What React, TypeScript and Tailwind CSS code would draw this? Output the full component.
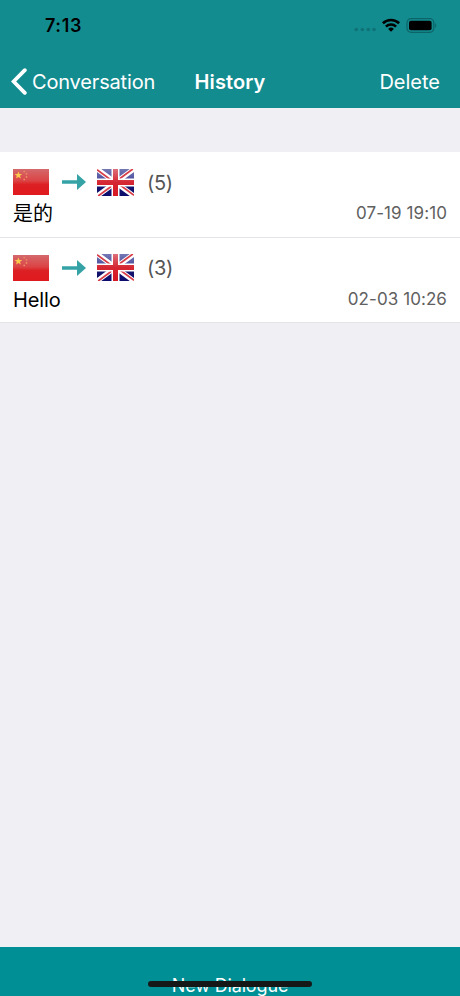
import { useState } from 'react'

const conversations = [
  { id: 1, text: '是的', count: 5, date: '07-19 19:10' },
  { id: 2, text: 'Hello', count: 3, date: '02-03 10:26' }
]

function ChinaFlag() {
  return (
    <svg viewBox="0 0 36 26" className="w-9 h-[26px]">
      <defs>
        <linearGradient id="cn-gloss" x1="0" y1="0" x2="0" y2="1">
          <stop offset="0" stopColor="#d4696b" />
          <stop offset="0.45" stopColor="#dc4446" />
          <stop offset="0.6" stopColor="#dc2023" />
          <stop offset="1" stopColor="#e01a1e" />
        </linearGradient>
      </defs>
      <rect width="36" height="26" fill="url(#cn-gloss)" />
      <path d="M5.4 2.4l1 2.6h2.8L7 6.8l.8 2.7-2.4-1.6L3 9.5l.8-2.7L1.6 5h2.8z" fill="#fbc94c" />
      <g fill="#e98f66">
        <circle cx="11.2" cy="2.6" r=".9" />
        <circle cx="13.5" cy="4.8" r=".9" />
        <circle cx="13.5" cy="8" r=".9" />
        <circle cx="11.2" cy="10.4" r=".9" />
      </g>
    </svg>
  )
}

function UkFlag() {
  return (
    <svg viewBox="0 0 37 27" className="w-[37px] h-[27px]">
      <defs>
        <linearGradient id="uk-blue" x1="0" y1="0" x2="0" y2="1">
          <stop offset="0" stopColor="#7478b4" />
          <stop offset="0.48" stopColor="#45499a" />
          <stop offset="0.55" stopColor="#17186f" />
          <stop offset="1" stopColor="#0c0c6c" />
        </linearGradient>
        <linearGradient id="uk-red" x1="0" y1="0" x2="0" y2="1">
          <stop offset="0" stopColor="#dd7079" />
          <stop offset="0.5" stopColor="#d52733" />
          <stop offset="1" stopColor="#d71722" />
        </linearGradient>
      </defs>
      <rect width="37" height="27" fill="url(#uk-blue)" />
      <path d="M0 0l37 27M37 0L0 27" stroke="#fff" strokeWidth="5" />
      <path d="M0 .8l16 11.7M37 26.2L21 14.5M35.8 0L19.5 12M1.2 27L17.5 15" stroke="#d63d48" strokeWidth="1.7" />
      <path d="M18.5 0v27M0 13.5h37" stroke="#fff" strokeWidth="8" />
      <path d="M16 0h5v11h16v5H21v11h-5V16H0v-5h16z" fill="url(#uk-red)" />
    </svg>
  )
}

function StatusBar() {
  return (
    <div className="h-[50px] flex items-center justify-between pl-[45px] pr-[23px] text-black">
      <span className="text-[18px] font-semibold tracking-[0.6px]">7:13</span>
      <div className="flex items-center">
        <svg viewBox="0 0 22 16" className="w-[22px] h-4" fill="#0f7276">
          <circle cx="2.3" cy="12.5" r="1.8" />
          <circle cx="8.3" cy="12.5" r="1.8" />
          <circle cx="14.3" cy="12.5" r="1.8" />
          <circle cx="20" cy="12.5" r="1.8" />
        </svg>
        <svg viewBox="0 0 18 14" className="w-[18px] h-3.5 ml-1.5" fill="none" stroke="#000" strokeWidth="2.6">
          <path d="M.9 5.2a11.7 11.7 0 0 1 16.2 0" />
          <path d="M3.9 8.6a7.4 7.4 0 0 1 10.2 0" />
          <path d="M9 13.8L6.1 11a4.2 4.2 0 0 1 5.8 0z" fill="#000" stroke="none" />
        </svg>
        <svg viewBox="0 0 31 15" className="w-[31px] h-[15px] ml-1.5">
          <rect x="1" y=".7" width="26.8" height="13.6" rx="4" fill="none" stroke="#0c6468" strokeWidth="1.2" />
          <rect x="3" y="2.8" width="22.6" height="9.4" rx="2" fill="#000" />
          <path d="M29.2 5.2c1.4.6 1.4 4 0 4.6z" fill="#0c6468" />
        </svg>
      </div>
    </div>
  )
}

export default function App() {
  const [items, setItems] = useState(conversations)

  return (
    <div className="w-full h-screen flex flex-col overflow-hidden bg-[#efeff4] font-['Inter','Noto_Sans_CJK_SC',sans-serif]">
      <header className="h-[108px] shrink-0 bg-[#138c90] text-white">
        <StatusBar />
        <nav className="h-[58px] grid grid-cols-[1fr_auto_1fr] items-center pl-[11px] pr-5 pb-px pt-1.5">
          <button className="flex items-center gap-[5px] text-left">
            <svg viewBox="0 0 16 27" className="w-4 h-[27px]" fill="none" stroke="#fff" strokeWidth="3.8" strokeLinecap="round">
              <path d="M13.8 2.2L2.6 13.5l11.2 11.3" />
            </svg>
            <span className="text-[20px] tracking-[-0.17px]">Conversation</span>
          </button>
          <h1 className="pl-[9px] text-[20px] font-semibold tracking-[0.1px]">History</h1>
          <button onClick={() => setItems([])} className="text-[20px] text-right">
            Delete
          </button>
        </nav>
      </header>

      {/* Conversation list */}
      <main className="flex-1 pt-11">
        {items.map((item) => (
          <div key={item.id} className="h-[85.5px] bg-white border-b border-[#e2e4e8] pl-[13px] pr-[13px] pt-4">
            <div className="h-7 flex items-center">
              <ChinaFlag />
              <svg viewBox="0 0 24 16" className="w-6 h-4 ml-[13px]" fill="#35a2a6">
                <path d="M0 6.3h15V0l9 8-9 8V9.7H0z" />
              </svg>
              <span className="ml-[11px]">
                <UkFlag />
              </span>
              <span className="ml-[13px] pt-px text-[20px] tracking-[-0.3px] text-[#555]">({item.count})</span>
            </div>
            <div className="h-[34px] pt-[2px] flex items-center justify-between">
              <span className="text-[20px] tracking-[-0.1px] text-black">{item.text}</span>
              <span className="text-[17px] tracking-[0.08px] text-[#606060]">{item.date}</span>
            </div>
          </div>
        ))}
      </main>

      <footer className="relative h-[49px] shrink-0 bg-[#008f94] text-center">
        <button className="pt-[29px] text-[18px] leading-5 tracking-[-0.15px] text-white">New Dialogue</button>
        {/* Home indicator */}
        <div className="absolute left-[148px] top-[34px] w-[164px] h-[6px] rounded-full bg-[#161818]" />
      </footer>
    </div>
  )
}
